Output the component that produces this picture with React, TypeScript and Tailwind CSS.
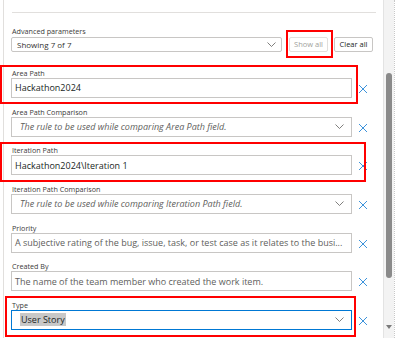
import React from "react";

type Field = {
  label: string;
  kind: "text" | "select";
  value?: string;
  placeholder?: string;
  focused?: boolean;
};

const fields: Field[] = [
  { label: "Area Path", kind: "text", value: "Hackathon2024" },
  {
    label: "Area Path Comparison",
    kind: "select",
    placeholder: "The rule to be used while comparing Area Path field.",
  },
  { label: "Iteration Path", kind: "text", value: "Hackathon2024\\Iteration 1" },
  {
    label: "Iteration Path Comparison",
    kind: "select",
    placeholder: "The rule to be used while comparing Iteration Path field.",
  },
  {
    label: "Priority",
    kind: "text",
    placeholder:
      "A subjective rating of the bug, issue, task, or test case as it relates to the busi...",
  },
  {
    label: "Created By",
    kind: "text",
    placeholder: "The name of the team member who created the work item.",
  },
  { label: "Type", kind: "select", value: "User Story", focused: true },
];

function Chevron() {
  return (
    <svg width="9" height="5" viewBox="0 0 9 5" className="shrink-0">
      <path d="M0.5 0.5 L4.5 4.5 L8.5 0.5" fill="none" stroke="#605e5c" strokeWidth="0.8" />
    </svg>
  );
}

function ClearIcon() {
  return (
    <svg width="10" height="10" viewBox="0 0 10 10">
      <path d="M1 1 L9 9 M9 1 L1 9" stroke="#1a7fd4" strokeWidth="0.85" />
    </svg>
  );
}

function FieldRow({ field }: { field: Field }) {
  const border = field.focused ? "border-[#0078d4]" : "border-[#c8c6c4]";
  return (
    <div className="flex flex-col">
      <div className="h-[10px] pl-px text-[7.2px] leading-[10px] text-[#3b3a39]">{field.label}</div>
      <div className="flex items-center">
        <div
          className={`flex h-[20px] w-[341px] items-center overflow-hidden border bg-white ${border} ${
            field.kind === "select" ? "pl-[8px] pr-[7px]" : "pl-[3px] pr-[4px]"
          }`}
        >
          {field.value && field.kind === "text" && (
            <span className="whitespace-nowrap text-[9px] text-[#201f1e]">{field.value}</span>
          )}
          {field.value && field.kind === "select" && (
            <span className="whitespace-nowrap bg-[#c8c8c8] px-px text-[9px] leading-[13px] text-[#201f1e]">
              {field.value}
            </span>
          )}
          {!field.value && (
            <span
              className={`whitespace-nowrap text-[9px] text-[#605e5c] ${
                field.kind === "select" ? "italic" : ""
              }`}
            >
              {field.placeholder}
            </span>
          )}
          {field.kind === "select" && (
            <div className="ml-auto pl-2">
              <Chevron />
            </div>
          )}
        </div>
        <div className="flex w-[22px] justify-center pt-[2px]">
          <ClearIcon />
        </div>
      </div>
    </div>
  );
}

export default function App() {
  return (
    <div className="relative flex h-[338px] w-[400px] overflow-hidden bg-white font-['Open_Sans',sans-serif]">
      {/* form panel */}
      <div className="ml-[3px] flex w-[380px] flex-col border-l border-[#e1dfdd] pl-[7px]">
        <div className="mr-[7px] ml-px mt-[12px] border-t border-[#e1dfdd]" />

        <div className="mt-[13px] h-[11px] pl-px text-[7.2px] leading-[11px] text-[#3b3a39]">
          Advanced parameters
        </div>
        <div className="flex items-center">
          <div className="flex h-[15px] w-[271px] items-center rounded-[2px] border border-[#c8c6c4] pl-[5px] pr-[5px]">
            <span className="text-[8px] text-[#323130]">Showing 7 of 7</span>
            <div className="ml-auto">
              <Chevron />
            </div>
          </div>
          <button className="ml-[7px] flex h-[15px] w-[39px] items-center justify-center rounded-[2px] border border-[#e1dfdd] text-[7.5px] text-[#a19f9d]">
            Show all
          </button>
          <button className="ml-[6px] flex h-[15px] w-[39px] items-center justify-center rounded-[2px] border border-[#c8c6c4] text-[7.5px] text-[#201f1e]">
            Clear all
          </button>
        </div>

        <div className="mt-[16px] flex flex-col gap-[8.67px]">
          {fields.map((f) => (
            <FieldRow key={f.label} field={f} />
          ))}
        </div>
      </div>

      {/* scrollbar */}
      <div className="ml-auto flex w-[11px] flex-col items-center border-l border-[#e3e3e3] bg-[#f3f3f3] pt-[73px]">
        <div className="h-[205px] w-[6px] rounded-full bg-[#8a8a8a]" />
        <div className="mt-auto mb-[9px] h-0 w-0 border-x-[3.5px] border-t-[4px] border-x-transparent border-t-[#7a7a7a]" />
      </div>
      <div className="w-[6px] border-l border-dotted border-[#c8c8c8]" />

      {/* annotation boxes */}
      <div className="pointer-events-none absolute left-[286px] top-[30px] h-[28px] w-[47px] border-2 border-[#f00]" />
      <div className="pointer-events-none absolute left-0 top-[65px] h-[39px] w-[358px] border-2 border-[#f00]" />
      <div className="pointer-events-none absolute left-0 top-[142px] h-[40px] w-[366px] border-2 border-[#f00]" />
      <div className="pointer-events-none absolute left-[5px] top-[296px] h-[41px] w-[351px] border-2 border-[#f00]" />
    </div>
  );
}
